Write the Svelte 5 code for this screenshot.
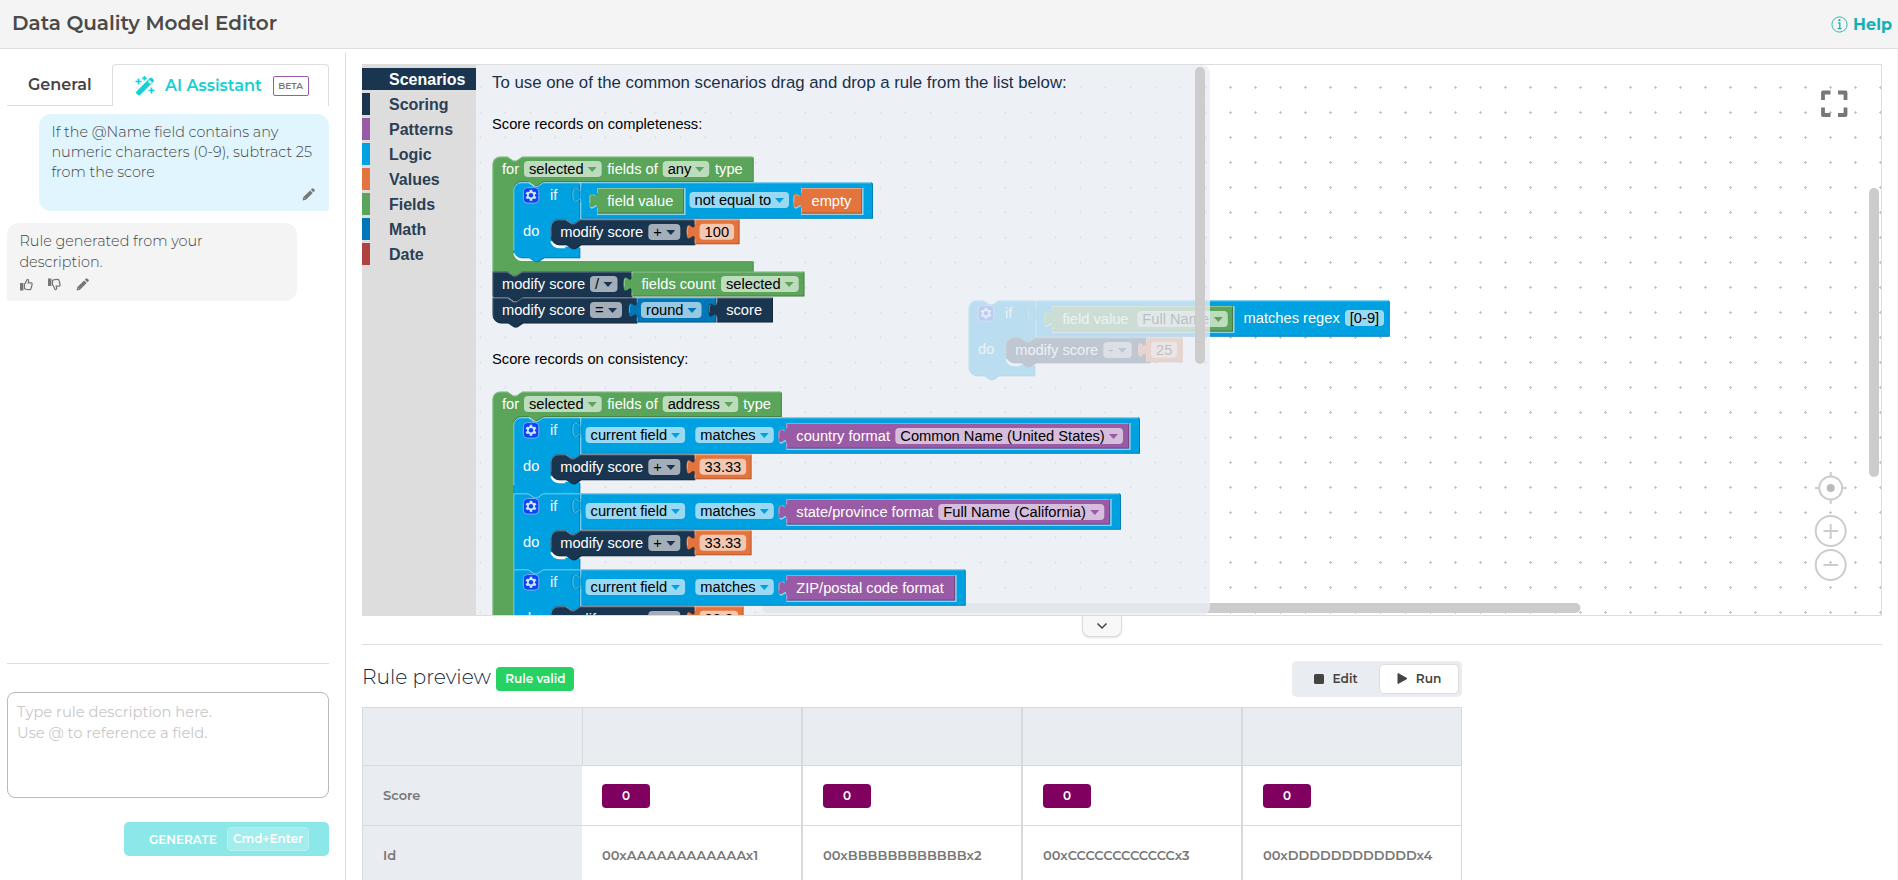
<script>
  const colors = {
    scoring: '#1a3550',
    patterns: '#995ba5',
    logic: '#00a1e0',
    values: '#e3743e',
    fields: '#5ba55b',
    math: '#0077b9',
    date: '#b04242'
  };

  const categories = [
    { name: 'Scenarios', color: colors.scoring, active: true },
    { name: 'Scoring', color: colors.scoring },
    { name: 'Patterns', color: colors.patterns },
    { name: 'Logic', color: colors.logic },
    { name: 'Values', color: colors.values },
    { name: 'Fields', color: colors.fields },
    { name: 'Math', color: colors.math },
    { name: 'Date', color: colors.date }
  ];

  const records = [
    { id: '00xAAAAAAAAAAAAx1', score: 0 },
    { id: '00xBBBBBBBBBBBBx2', score: 0 },
    { id: '00xCCCCCCCCCCCCx3', score: 0 },
    { id: '00xDDDDDDDDDDDDx4', score: 0 }
  ];

  let description = $state('');

  const NOTCH = 'l 6,4 3,0 6,-4';
  const NOTCH_BACK = 'l -6,4 -3,0 -6,-4';
  const TAB = 'c 0,10 -8,-8 -8,7.5 s 8,-2.5 8,7.5';

  // value block with the puzzle tab on its left edge
  function valuePath(w, h) {
    return `M 0,0 H ${w} V ${h} H 0 V 20 c 0,-10 -8,8 -8,-7.5 s 8,2.5 8,-7.5 Z`;
  }

  function statementPath(w, h, top, bottom) {
    const start = top ? 'M 0,8 a 8,8 0 0 1 8,-8' : 'M 0,0';
    const end = bottom ? `H 8 a 8,8 0 0 1 -8,-8` : `H 0`;
    return `${start} H 15 ${NOTCH} H ${w} V ${h} H 30 ${NOTCH_BACK} ${end} Z`;
  }

  function forPath(w, h) {
    return `M 0,8 a 8,8 0 0 1 8,-8 H 15 ${NOTCH} H ${w} V 24.5 H 51 ${NOTCH_BACK} H 29 a 8,8 0 0 0 -8,8
      V ${h - 18.5} a 8,8 0 0 0 8,8 H ${w} V ${h} H 30 ${NOTCH_BACK} H 0 Z`;
  }

  function ifPath(h, top, bottom) {
    const start = top ? 'M 0,8 a 8,8 0 0 1 8,-8' : 'M 0,0';
    const end = bottom ? `H 8 a 8,8 0 0 1 -8,-8` : `H 0`;
    return `${start} H 15 ${NOTCH} H 66 V 36.5 H 67.5 ${NOTCH_BACK} H 45.5 a 8,8 0 0 0 -8,8 V 56.5 a 8,8 0 0 0 8,8
      H 66 V ${h} H 30 ${NOTCH_BACK} ${end} Z`;
  }

  const formats = [
    { y: 417.3, label: 'country format', field: 'Common Name (United States)', fx: 109, fw: 227.7, w: 342.8, arm: 625.7, score: '33.33', sw: 57 },
    { y: 493.3, label: 'state/province format', field: 'Full Name (California)', fx: 152, fw: 166, w: 323.8, arm: 606.7, score: '33.33', sw: 57 },
    { y: 569.3, label: 'ZIP/postal code format', w: 168.8, arm: 451.5, score: '33.3', sw: 49 }
  ];
</script>

{#snippet shape(d, color)}
  <path {d} fill={color} transform="translate(1,1)" />
  <path {d} fill="#000" opacity="0.2" transform="translate(1,1)" />
  <path {d} fill={color} />
{/snippet}

{#snippet forBlock(x, y, w, h)}
  <g transform="translate({x},{y})">
    {@render shape(forPath(w, h), colors.fields)}
    <path d="M 0.5,{h} V 8 a 7.5,7.5 0 0 1 7.5,-7.5 H 15 {NOTCH} H {w}" fill="none" stroke="#fff" stroke-opacity="0.3" />
    <path d="M 21.5,{h - 18} a 8,8 0 0 0 8,7.5 H {w}" fill="none" stroke="#fff" stroke-opacity="0.85" />
  </g>
{/snippet}

{#snippet dropdown(x, y, w, label, color)}
  <rect {x} {y} width={w} height="16" rx="4" fill="#fff" fill-opacity="0.6" />
  <text class="dark" x={x + 5} y={y + 13}>{label}</text>
  <path d="M {x + w - 14},{y + 6} h 9 l -4.5,5 Z" fill={color} />
{/snippet}

{#snippet value(x, y, w, h, color, raised)}
  <g transform="translate({x},{y})">
    {#if raised}
      <path d={valuePath(w, h)} fill="none" stroke="#8fd0ec" stroke-width="1.6" transform="translate(0.8,0.8)" />
    {/if}
    <path d={valuePath(w, h)} fill={color} />
    <path d="M {w - 0.5},1 V {h - 0.5} H 1" fill="none" stroke="#000" stroke-opacity="0.22" />
    <path d="M 0.5,{h - 1} V 20 M 0.5,5 V 0.5 H {w - 1}" fill="none" stroke="#fff" stroke-opacity="0.35" />
    <path d="M -7,15 q -0.8,-8 1.5,-7.5" fill="none" stroke="#fff" stroke-opacity="0.35" />
  </g>
{/snippet}

{#snippet statement(x, y, w, top, bottom)}
  <g transform="translate({x},{y})">
    {@render shape(statementPath(w, 25, top, bottom), colors.scoring)}
    <path
      d={top ? `M 0.5,18 V 8 a 7.5,7.5 0 0 1 7.5,-7.5 H 15 ${NOTCH} H ${w}` : `M 0.5,25 V 0.5 H 15 ${NOTCH} H ${w}`}
      fill="none" stroke="#fff" stroke-opacity="0.35"
    />
    <text x="9.7" y="17.6">modify score</text>
  </g>
{/snippet}

{#snippet number(x, y, w, label)}
  {@render value(x, y, w, 25, colors.values)}
  <rect x={x + 5} y={y + 4.5} width={w - 10.5} height="16" rx="4" fill="#fff" fill-opacity="0.6" />
  <text class="dark" x={x + 10} y={y + 17.6}>{label}</text>
{/snippet}

{#snippet ifBlock(arm, top, bottom, op, opWidth, scoreWidth, score)}
  {@render shape(ifPath(bottom ? 75 : 76, top, bottom), colors.logic)}
  <path
    d={top ? `M 0.5,68 V 8 a 7.5,7.5 0 0 1 7.5,-7.5 H 15 ${NOTCH} H 67` : `M 0.5,76 V 0.5 H 15 ${NOTCH} H 67`}
    fill="none" stroke="#fff" stroke-opacity="0.5"
  />
  <path d="M 38,59 a 8,8 0 0 0 8,6 H 52" fill="none" stroke="#fff" stroke-width="2" />
  <!-- condition row -->
  <g transform="translate(67,0)">
    {@render shape(`M 0,0 H ${arm - 67} V 35.5 H 0 Z`, colors.logic)}
    <path d="M 0.5,36 V 20 M 0.5,5 V 0.5 H {arm - 68}" fill="none" stroke="#fff" stroke-opacity="0.5" />
    <path d="M 0.5,5 {TAB}" fill="none" stroke="#fff" stroke-opacity="0.4" />
    <path d="M -0.5,5 {TAB}" fill="none" stroke="#000" stroke-opacity="0.2" />
  </g>
  <rect x="10" y="5.3" width="15.5" height="15.5" rx="4" fill="#0a45f5" stroke="#7faaf8" />
  <g transform="translate(17.7,13)" fill="#cfe6fb">
    {#each [0, 60, 120] as a}
      <rect x="-1.3" y="-5.5" width="2.6" height="11" transform="rotate({a})" />
    {/each}
    <circle r="4" />
    <circle r="2.2" fill="#0a45f5" />
  </g>
  <text x="36.7" y="17.7">if</text>
  <text x="9.7" y="54">do</text>
  {@render statement(37.2, 37, 143.8, true, true)}
  {@render dropdown(135, 41.7, opWidth, op, colors.scoring)}
  {@render number(scoreWidth[0], 37, scoreWidth[1], score)}
{/snippet}

{#snippet pencil()}
  <svg width="13" height="13" viewBox="0 0 13 13" fill="#777">
    <path d="M9.8.7a1.2 1.2 0 0 1 1.7 0l.9.9a1.2 1.2 0 0 1 0 1.7l-1 1-2.6-2.6zM8.1 2.4 10.7 5 4 11.7l-3.5.9.9-3.5zM2.6 9.8l-.2.9.9-.2z" fill-rule="evenodd" />
  </svg>
{/snippet}

{#snippet thumb(down)}
  <svg width="13" height="13" viewBox="0 0 13 13">
    <g transform={down ? 'translate(0 13) scale(1 -1)' : undefined}>
      <rect x="0" y="5" width="3.4" height="7.5" fill="#777" />
      <path d="M4.5 6C6.5 5 6 1.5 7.5 1.3c1.5 0 1.2 2.2.7 3.6h3c1.2 0 1.2 1.5.5 2 .5.7.2 1.5-.3 1.7.3.8 0 1.4-.5 1.6.1 1-.4 1.5-1.2 1.5-2.2 0-3.5-.2-5.2-1z" fill="none" stroke="#777" stroke-width="1.2" />
    </g>
  </svg>
{/snippet}

<div class="page">
  <header>
    <h1>Data Quality Model Editor</h1>
    <a class="help" href="#help">
      <svg width="17" height="17" viewBox="0 0 17 17">
        <circle cx="8.5" cy="8.5" r="7.6" fill="none" stroke="currentColor" stroke-width="0.9" />
        <path d="M7 6.8h1.8v5.6M6.6 12.6h4" fill="none" stroke="currentColor" stroke-width="1.3" />
        <circle cx="8.4" cy="4.2" r="1.1" fill="currentColor" />
      </svg>
      <span>Help</span>
    </a>
  </header>

  <div class="body">
    <aside>
      <div class="tabs">
        <button class="tab general">General</button>
        <button class="tab active">
          <svg width="20" height="20" viewBox="0 0 20 20">
            <rect x="-2.6" y="-11" width="5.2" height="22" rx="1.8" transform="translate(10,10.5) rotate(45)" fill="currentColor" />
            <path d="M12.9 5.5l2.4 2.4 1.6-1.6-2.4-2.4z" fill="#fff" />
            <g stroke="currentColor" stroke-width="1.7" fill="none">
              <path d="M3.5 2.5v6M.5 5.500h6M9.500 0v4.600M7.200 2.300h4.600M16.500 11.500v6M13.500 14.500h6" />
            </g>
          </svg>
          <span class="ai">AI Assistant</span>
          <span class="beta">BETA</span>
        </button>
      </div>

      <div class="chat">
        <div class="message user">
          <p>If the @Name field contains any<br />numeric characters (0-9), subtract 25<br />from the score</p>
          <div class="actions right">{@render pencil()}</div>
        </div>
        <div class="message bot">
          <p>Rule generated from your<br />description.</p>
          <div class="actions">
            {@render thumb(false)}
            {@render thumb(true)}
            {@render pencil()}
          </div>
        </div>
      </div>

      <div class="prompt">
        <textarea bind:value={description} placeholder={'Type rule description here.\nUse @ to reference a field.'}></textarea>
        <button class="generate">
          <span>GENERATE</span>
          <kbd>Cmd+Enter</kbd>
        </button>
      </div>
    </aside>

    <main>
      <div class="editor">
        <ul class="toolbox">
          {#each categories as category}
            <li class:active={category.active} style="border-left-color: {category.color}">{category.name}</li>
          {/each}
        </ul>

        <svg class="workspace" width="1405" height="550" viewBox="476 65 1405 550">
          <defs>
            <pattern id="grid" x="468" y="100" width="25" height="25" patternUnits="userSpaceOnUse">
              <path d="M11 12.5h3M12.5 11v3" stroke="#c4c4c4" />
            </pattern>
          </defs>
          <rect x="476" y="65" width="1405" height="550" fill="url(#grid)" />

          <rect x="762.5" y="603" width="818" height="10" rx="5" fill="#ccc" />
          <rect x="1869" y="188" width="10" height="289" rx="5" fill="#ccc" />

          <!-- rule on the canvas -->
          <g transform="translate(968.3,300.3)">
            {@render ifBlock(420.5, true, true, '-', 28.5, [177.7, 36.7], '25')}
            {@render value(83.7, 5.7, 181, 25.5, colors.fields, true)}
            <text x="94.2" y="23.7">field value</text>
            {@render dropdown(169, 10.7, 90.5, 'Full Name', colors.fields)}
            <text x="275.3" y="22.7">matches regex</text>
            <rect x="376.7" y="9.7" width="39" height="16" rx="4" fill="#fff" fill-opacity="0.6" />
            <text class="dark" x="381.5" y="22.7">[0-9]</text>
          </g>

          <g fill="none" stroke="#ccc" stroke-width="2">
            <circle cx="1830.7" cy="488" r="11.5" />
            <path d="M1830.7 472v4.5M1830.7 499.5v4.5M1815 488h4M1842 488h4.5" />
            <circle cx="1830.7" cy="488" r="4" fill="#bbb" stroke="none" />
            <circle cx="1830.7" cy="531" r="15" />
            <path d="M1830.7 524v14M1823.5 531h14.500" />
            <circle cx="1830.7" cy="565" r="15" />
            <path d="M1823.5 565h14.500" />
          </g>
          <path
            d="M1823 100v-7.5h7.5M1838 92.5h7.5V100M1845.5 107.500v7.5H1838M1830.5 115H1823V107.500"
            fill="none" stroke="#777" stroke-width="3.8" stroke-linejoin="round"
          />

          <!-- flyout -->
          <path d="M476,65 H1202 a8,8 0 0 1 8,8 V607 a8,8 0 0 1 -8,8 H476 Z" fill="#e9ecf3" fill-opacity="0.8" />
          <rect x="490" y="72" width="580" height="22" fill="#edf0f6" />
          <text class="title" x="492.1" y="88">To use one of the common scenarios drag and drop a rule from the list below:</text>
          <text class="dark" x="492.1" y="129">Score records on completeness:</text>
          <text class="dark" x="492.1" y="364">Score records on consistency:</text>

          {@render forBlock(492.3, 156.5, 260.4, 114.5)}
          <text x="502" y="174.3">for</text>
          {@render dropdown(524, 161, 77.7, 'selected', colors.fields)}
          <text x="607.3" y="174.3">fields of</text>
          {@render dropdown(662.7, 161, 46.5, 'any', colors.fields)}
          <text x="715" y="174.3">type</text>

          <g transform="translate(513.3,182.3)">
            {@render ifBlock(358.7, true, true, '+', 32, [181.3, 45], '100')}
          </g>
          {@render value(597, 188, 87, 25.5, colors.fields, true)}
          <text x="607.3" y="206">field value</text>
          {@render dropdown(689.5, 192, 99.5, 'not equal to', colors.logic)}
          {@render value(801, 188, 61, 25.5, colors.values, true)}
          <text x="811.5" y="206">empty</text>

          {@render statement(492.3, 271.5, 139, false, false)}
          {@render dropdown(590, 276, 27.5, '/', colors.scoring)}
          {@render value(631.5, 271.5, 173, 25, colors.fields)}
          <text x="641.5" y="289">fields count</text>
          {@render dropdown(721, 276, 77.7, 'selected', colors.fields)}

          {@render statement(492.3, 297.5, 144, false, true)}
          {@render dropdown(590, 302, 32, '=', colors.scoring)}
          {@render value(636.7, 297.5, 79.5, 25, colors.math)}
          {@render dropdown(641, 302, 60.5, 'round', colors.math)}
          {@render value(716.5, 297.5, 56.5, 25, colors.scoring)}
          <text x="726.2" y="315">score</text>

          {@render forBlock(492.3, 391.5, 288.6, 400)}
          <text x="502" y="409.3">for</text>
          {@render dropdown(524, 396, 77.7, 'selected', colors.fields)}
          <text x="607.3" y="409.3">fields of</text>
          {@render dropdown(662.7, 396, 75.5, 'address', colors.fields)}
          <text x="743.3" y="409.3">type</text>

          {#each formats as format, i}
            <g transform="translate(513.3,{format.y})">
              {@render ifBlock(format.arm, i === 0, false, '+', 32, [181.3, format.sw], format.score)}
              {@render dropdown(72.3, 9.7, 99.5, 'current field', colors.logic)}
              {@render dropdown(182, 9.7, 78.5, 'matches', colors.logic)}
              {@render value(273, 5.7, format.w, 25.5, colors.patterns, true)}
              <text x="283" y="23.7">{format.label}</text>
              {#if format.field}
                {@render dropdown(273 + format.fx, 10.7, format.fw, format.field, colors.patterns)}
              {/if}
            </g>
          {/each}

          <rect x="1195" y="67" width="10" height="297" rx="5" fill="#ccc" />
        </svg>
        <button class="collapse" aria-label="Collapse">
          <svg width="12" height="8" viewBox="0 0 12 8"><path d="M1.5 1.5 6 6l4.5-4.5" fill="none" stroke="#444" stroke-width="1.5" /></svg>
        </button>
      </div>

      <section class="preview">
        <div class="preview-head">
          <h2>Rule preview</h2>
          <span class="valid">Rule valid</span>
          <div class="toggle">
            <button>
              <svg width="10" height="10"><rect width="10" height="10" rx="1.5" fill="#444" /></svg>
              Edit
            </button>
            <button class="on">
              <svg width="11" height="13"><path d="M1 1.5v10l9-5z" fill="#444" stroke="#444" stroke-linejoin="round" /></svg>
              Run
            </button>
          </div>
        </div>
        <table>
          <thead>
            <tr><th></th>{#each records as record}<th></th>{/each}</tr>
          </thead>
          <tbody>
            <tr>
              <th>Score</th>
              {#each records as record}<td><span class="score">{record.score}</span></td>{/each}
            </tr>
            <tr>
              <th>Id</th>
              {#each records as record}<td>{record.id}</td>{/each}
            </tr>
          </tbody>
        </table>
      </section>
    </main>
  </div>
</div>

<style>
  :global(body) {
    background: #fff;
    font-family: Montserrat, Inter, sans-serif;
    color: #444;
    overflow: hidden;
  }

  .page {
    height: 880px;
    overflow: hidden;
  }

  header {
    box-sizing: border-box;
    height: 49px;
    padding: 0 6px 0 12px;
    display: flex;
    align-items: center;
    justify-content: space-between;
    background: #f4f4f4;
    border-bottom: 1px solid #ddd;
  }

  h1 {
    margin: 0 0 2px;
    font-size: 20px;
    font-weight: 600;
    color: #4a4a4a;
  }

  .help {
    display: flex;
    align-items: center;
    gap: 5px;
    color: #16b0b4;
    font-size: 16px;
    font-weight: 700;
    text-decoration: none;
  }

  .body {
    box-sizing: border-box;
    height: 831px;
    display: flex;
    border-right: 1px solid #f4f4f4;
  }

  aside {
    box-sizing: border-box;
    width: 346px;
    margin-top: 3px;
    padding: 12px 16px 0 7px;
    border-right: 1px solid #ddd;
    display: flex;
    flex-direction: column;
  }

  button {
    font-family: inherit;
    color: inherit;
    border: 0;
    background: none;
    padding: 0;
  }

  .tabs {
    display: flex;
    height: 42px;
  }

  .tab {
    display: flex;
    align-items: center;
    font-size: 16px;
    font-weight: 600;
  }

  .general {
    width: 105px;
    padding-left: 21px;
    border-bottom: 1px solid #ddd;
  }

  .tab.active {
    flex: 1;
    padding-left: 22px;
    border: 1px solid #ddd;
    border-bottom: 0;
    border-radius: 4px 4px 0 0;
    color: #18cfd3;
  }

  .ai {
    margin-left: 10px;
  }

  .beta {
    box-sizing: border-box;
    width: 36px;
    height: 20px;
    margin-left: 11px;
    border: 1px solid #995ba5;
    border-radius: 2px;
    color: #777;
    font-size: 9px;
    line-height: 18px;
    text-align: center;
  }

  .chat {
    height: 558px;
    padding-top: 8px;
    box-sizing: border-box;
    border-bottom: 1px solid #ddd;
  }

  .message {
    box-sizing: border-box;
    width: 290px;
    padding: 8px 13px 0 12.4px;
    font-size: 14.4px;
    font-weight: 300;
    color: #444;
  }

  .message p {
    margin: 0;
    white-space: nowrap;
  }

  .user {
    height: 97px;
    margin-left: 32px;
    line-height: 20px;
    background: #e0f5fe;
    border-radius: 12px 12px 3px 12px;
  }

  .bot {
    height: 78px;
    margin-top: 12px;
    line-height: 21px;
    background: #f4f4f4;
    border-radius: 12px 12px 12px 2px;
  }

  .actions {
    display: flex;
    gap: 15px;
    margin: 5px 0 0 1px;
  }

  .actions.right {
    justify-content: flex-end;
    margin: 6px 1px 0 0;
  }

  .prompt {
    padding-top: 28px;
    display: flex;
    flex-direction: column;
    align-items: flex-end;
  }

  textarea {
    box-sizing: border-box;
    width: 322px;
    height: 106px;
    padding: 9px;
    border: 1px solid #bbb;
    border-radius: 8px;
    resize: none;
    font: 400 14.7px/21px Montserrat, Inter, sans-serif;
  }

  textarea::placeholder {
    color: #c8c8c8;
  }

  .generate {
    box-sizing: border-box;
    width: 205px;
    height: 34px;
    margin-top: 24px;
    padding: 0 20px 0 25px;
    display: flex;
    align-items: center;
    justify-content: space-between;
    background: #8ce8e8;
    border-radius: 5px;
    color: #fff;
    font-size: 12px;
    font-weight: 600;
  }

  kbd {
    box-sizing: border-box;
    width: 82px;
    height: 24px;
    border: 1px solid #b5f0f0;
    border-radius: 4px;
    background: #a3eded;
    font-family: inherit;
    line-height: 22px;
    text-align: center;
  }

  main {
    flex: 1;
    padding: 15px 15px 0 16px;
  }

  .editor {
    position: relative;
    box-sizing: border-box;
    width: 1520px;
    height: 552px;
    border: 1px solid #ddd;
    border-left: 0;
    display: flex;
  }

  .toolbox {
    box-sizing: border-box;
    width: 114px;
    height: 552px;
    margin: -1px 0 0;
    padding: 4px 0 0;
    list-style: none;
    background: #ddd;
    font: bold 16px 'Liberation Sans', sans-serif;
    color: #2b3f55;
  }

  .toolbox li {
    height: 22px;
    margin-bottom: 3px;
    padding-left: 19px;
    border-left: 8px solid;
    line-height: 23px;
  }

  .toolbox .active {
    background: #1a3550;
    color: #fff;
  }

  .workspace {
    display: block;
    font-family: 'Liberation Sans', sans-serif;
    font-size: 14.667px;
  }

  .workspace text {
    fill: #fff;
  }

  .workspace .dark {
    fill: #000;
  }

  .workspace .title {
    font-size: 16.8px;
    fill: #1a3048;
  }

  .collapse {
    position: absolute;
    left: 720px;
    top: 551px;
    width: 40px;
    height: 21px;
    display: flex;
    align-items: center;
    justify-content: center;
    background: #f8f8f8;
    border: 1px solid #ddd;
    border-top: 0;
    border-radius: 0 0 8px 8px;
    box-shadow: 0 1px 2px rgba(0, 0, 0, 0.12);
  }

  .preview {
    margin-top: 28px;
    border-top: 1px solid #ddd;
  }

  .preview-head {
    width: 1100px;
    height: 62px;
    display: flex;
    align-items: center;
  }

  h2 {
    margin: 0 5.5px 0 0;
    font-size: 20.2px;
    font-weight: 300;
    color: #0f2640;
  }

  .valid {
    width: 78px;
    height: 24px;
    margin-top: 6px;
    border-radius: 4px;
    background: #26d362;
    color: #fff;
    font-size: 12px;
    font-weight: 600;
    line-height: 23px;
    text-align: center;
  }

  .toggle {
    box-sizing: border-box;
    width: 170px;
    height: 36px;
    margin: 5px 0 0 auto;
    padding: 3px;
    display: flex;
    border-radius: 5px;
    background: #e9ecf1;
  }

  .toggle button {
    box-sizing: border-box;
    height: 30px;
    flex: 1;
    display: flex;
    align-items: center;
    justify-content: center;
    gap: 8px;
    padding-right: 2px;
    font-size: 12.2px;
    font-weight: 600;
  }

  .toggle .on {
    flex: none;
    width: 80px;
    padding: 0;
    background: #fff;
    border: 1px solid #ddd;
    border-radius: 5px;
  }

  table {
    width: 1100px;
    table-layout: fixed;
    border-collapse: separate;
    border-spacing: 0;
    border-top: 1px solid #d5dade;
    font-size: 13px;
    color: #777;
  }

  th, td {
    box-sizing: border-box;
    height: 60px;
    padding: 0 0 2px 20px;
    text-align: left;
    font-weight: 600;
    border: 1px solid #d5dade;
    border-top: 0;
  }

  thead th {
    height: 58px;
  }

  th {
    background: #e9ecf1;
  }

  thead th:first-child,
  tbody th {
    border-right: 0;
  }

  tbody td:nth-child(2) {
    border-left: 0;
  }

  .score {
    display: block;
    width: 48px;
    height: 24px;
    margin-top: 2px;
    border-radius: 4px;
    background: #7f005f;
    color: #fff;
    font-size: 12px;
    line-height: 24px;
    text-align: center;
  }
</style>
